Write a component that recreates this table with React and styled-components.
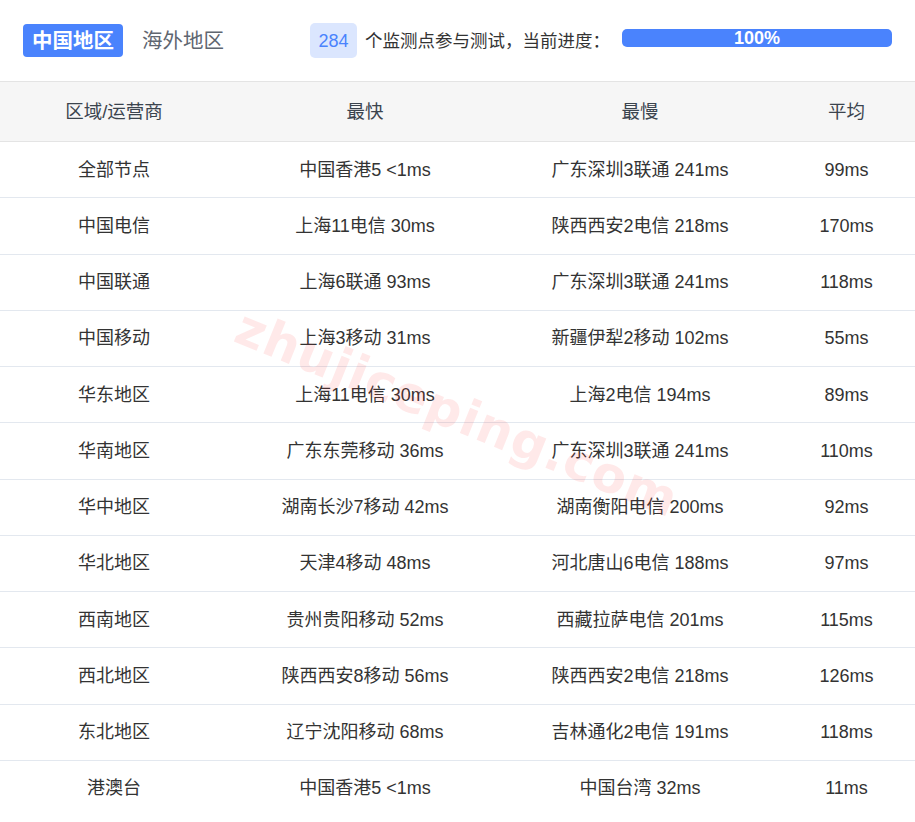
import React from 'react';
import styled, { createGlobalStyle } from 'styled-components';

const GlobalStyle = createGlobalStyle`
  body {
    margin: 0;
    background: #fff;
    font-family: "Liberation Sans", "Noto Sans CJK SC", sans-serif;
  }
`;

const Page = styled.div`
  position: relative;
  width: 915px;
  height: 822px;
  overflow: hidden;
  background: #fff;
`;

const TopBar = styled.div`
  height: 82px;
  display: flex;
  align-items: center;
  padding: 0 23px;
  box-sizing: border-box;
  border-bottom: 1px solid #e4e4e4;
  white-space: nowrap;
`;

const Tab = styled.div`
  flex-shrink: 0;
  height: 33px;
  padding: 0 9px;
  margin-right: 10px;
  border-radius: 4px;
  display: flex;
  align-items: center;
  font-size: 20.5px;
  line-height: 24px;
  font-weight: ${(p) => (p.active ? 700 : 400)};
  color: ${(p) => (p.active ? '#fff' : '#5f6670')};
  background: ${(p) => (p.active ? '#4a83fd' : 'transparent')};
`;

const Status = styled.div`
  flex-shrink: 0;
  margin-left: 67px;
  display: flex;
  align-items: center;
  font-size: 17.5px;
  line-height: 22px;
  color: #333;
`;

const Badge = styled.span`
  flex-shrink: 0;
  height: 35px;
  width: 47px;
  border-radius: 5px;
  background: #dbe6fe;
  color: #4a83fd;
  font-size: 18px;
  display: flex;
  align-items: center;
  justify-content: center;
  margin-right: 8px;
`;

const Bar = styled.div`
  flex-shrink: 0;
  margin-left: 12px;
  margin-bottom: 5px;
  width: 270px;
  height: 18px;
  border-radius: 5px;
  background: #e8eefc;
  overflow: hidden;
`;

const Fill = styled.div`
  height: 100%;
  background: #4a83fd;
  color: #fff;
  font-weight: 700;
  font-size: 18px;
  line-height: 19px;
  text-align: center;
`;

const Table = styled.div`
  display: grid;
  grid-template-columns: 228px 274px 276px 137px;
`;

const HeadCell = styled.div`
  height: 59px;
  display: flex;
  align-items: center;
  justify-content: center;
  background: #f6f6f6;
  border-bottom: 1px solid #e4e4e4;
  color: #3b444e;
  font-size: 18.5px;
  line-height: 24px;
`;

const Cell = styled.div`
  height: 55.25px;
  display: flex;
  align-items: center;
  justify-content: center;
  border-bottom: ${(p) => (p.last ? 'none' : '1px solid #e3e8ef')};
  color: #333;
  font-size: 18px;
`;

const CellText = styled.span`
  display: block;
  height: 24px;
  line-height: 24px;
  white-space: nowrap;
`;

const Watermark = styled.div`
  position: absolute;
  left: 238px;
  top: 296px;
  transform: rotate(22deg);
  transform-origin: left center;
  font-family: "DejaVu Sans", sans-serif;
  font-weight: 700;
  font-size: 50px;
  letter-spacing: 1px;
  color: rgba(255, 40, 40, 0.1);
  pointer-events: none;
  white-space: nowrap;
`;

const rows = [
  ['全部节点', '中国香港5 <1ms', '广东深圳3联通 241ms', '99ms'],
  ['中国电信', '上海11电信 30ms', '陕西西安2电信 218ms', '170ms'],
  ['中国联通', '上海6联通 93ms', '广东深圳3联通 241ms', '118ms'],
  ['中国移动', '上海3移动 31ms', '新疆伊犁2移动 102ms', '55ms'],
  ['华东地区', '上海11电信 30ms', '上海2电信 194ms', '89ms'],
  ['华南地区', '广东东莞移动 36ms', '广东深圳3联通 241ms', '110ms'],
  ['华中地区', '湖南长沙7移动 42ms', '湖南衡阳电信 200ms', '92ms'],
  ['华北地区', '天津4移动 48ms', '河北唐山6电信 188ms', '97ms'],
  ['西南地区', '贵州贵阳移动 52ms', '西藏拉萨电信 201ms', '115ms'],
  ['西北地区', '陕西西安8移动 56ms', '陕西西安2电信 218ms', '126ms'],
  ['东北地区', '辽宁沈阳移动 68ms', '吉林通化2电信 191ms', '118ms'],
  ['港澳台', '中国香港5 <1ms', '中国台湾 32ms', '11ms'],
];

const App = () => {
  return (
    <Page>
      <GlobalStyle />
      <TopBar>
        <Tab active>中国地区</Tab>
        <Tab>海外地区</Tab>
        <Status>
          <Badge>284</Badge>
          个监测点参与测试，当前进度：
          <Bar>
            <Fill style={{ width: '100%' }}>100%</Fill>
          </Bar>
        </Status>
      </TopBar>
      <Table>
        {['区域/运营商', '最快', '最慢', '平均'].map((h) => (
          <HeadCell key={h}>{h}</HeadCell>
        ))}
        {rows.map((r, i) =>
          r.map((c, j) => (
            <Cell key={i + '-' + j} last={i === rows.length - 1}>
              <CellText>{c}</CellText>
            </Cell>
          ))
        )}
      </Table>
      <Watermark>zhujiceping.com</Watermark>
    </Page>
  );
};

export default App;
